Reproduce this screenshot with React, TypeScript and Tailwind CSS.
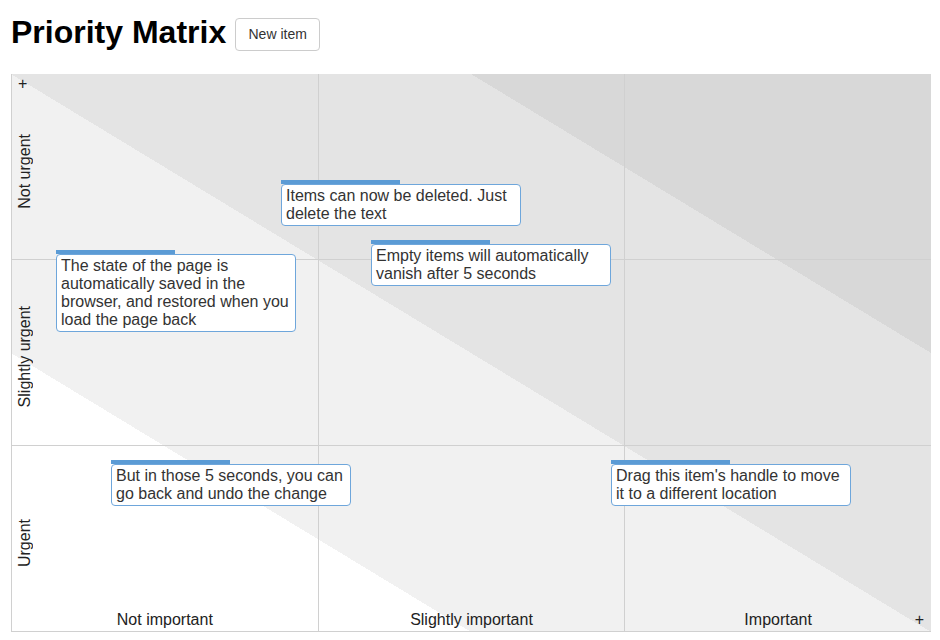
const notes = [
  { pos: "left-[270px] top-[106px]", text: "Items can now be deleted. Just delete the text" },
  { pos: "left-[360px] top-[166px]", text: "Empty items will automatically vanish after 5 seconds" },
  {
    pos: "left-[45px] top-[176px]",
    text: "The state of the page is automatically saved in the browser, and restored when you load the page back",
  },
  { pos: "left-[100px] top-[386px]", text: "But in those 5 seconds, you can go back and undo the change" },
  { pos: "left-[600px] top-[386px]", text: "Drag this item's handle to move it to a different location" },
];

const rows = ["Not urgent", "Slightly urgent", "Urgent"];
const cols = ["Not important", "Slightly important", "Important"];

function Note({ pos, text }: { pos: string; text: string }) {
  return (
    <div className={`absolute z-10 ${pos}`}>
      <div className="h-[4px] w-[119px] bg-[#5b9bd5]" />
      <div className="w-[240px] rounded-[4px] border border-[#6ea6db] bg-white px-[4px] py-[2px] text-[16px] leading-[18px] text-[#333]">
        {text}
      </div>
    </div>
  );
}

export default function App() {
  return (
    <div className="min-h-[640px] bg-white px-[11px] pt-[14px] font-['Liberation_Sans',Arial,sans-serif] text-[#222]">
      <div className="flex items-start gap-[9px]">
        <h1 className="text-[32px] font-bold leading-[37px] text-black">Priority Matrix</h1>
        <button className="mt-[4px] h-[33px] w-[85px] rounded-[4px] border border-[#cccccc] bg-white text-[14px] text-[#333]">
          New item
        </button>
      </div>

      <div className="relative mt-[23px] grid h-[558px] w-[920px] grid-cols-3 grid-rows-3 bg-[linear-gradient(to_top_right,#ffffff_25%,#f1f1f1_25%,#f1f1f1_50%,#e4e4e4_50%,#e4e4e4_75%,#d8d8d8_75%)]">
        {rows.map((row, r) =>
          cols.map((col, c) => (
            <div
              key={`${r}-${c}`}
              className="grid border-b border-l border-[#d0d0d0] text-[16px] leading-[18px]"
            >
              {r === 0 && c === 0 && (
                <span className="ml-[6px] mt-[1px] self-start justify-self-start [grid-area:1/1]">+</span>
              )}
              {c === 0 && (
                <span className="ml-[4px] mt-[9px] rotate-180 self-center justify-self-start [grid-area:1/1] [writing-mode:vertical-rl]">
                  {row}
                </span>
              )}
              {r === 2 && (
                <span className="mb-[2px] self-end justify-self-center [grid-area:1/1]">{col}</span>
              )}
              {r === 2 && c === 2 && (
                <span className="mb-[2px] mr-[7px] self-end justify-self-end [grid-area:1/1]">+</span>
              )}
            </div>
          ))
        )}
        {notes.map((n) => (
          <Note key={n.text} pos={n.pos} text={n.text} />
        ))}
      </div>
    </div>
  );
}
